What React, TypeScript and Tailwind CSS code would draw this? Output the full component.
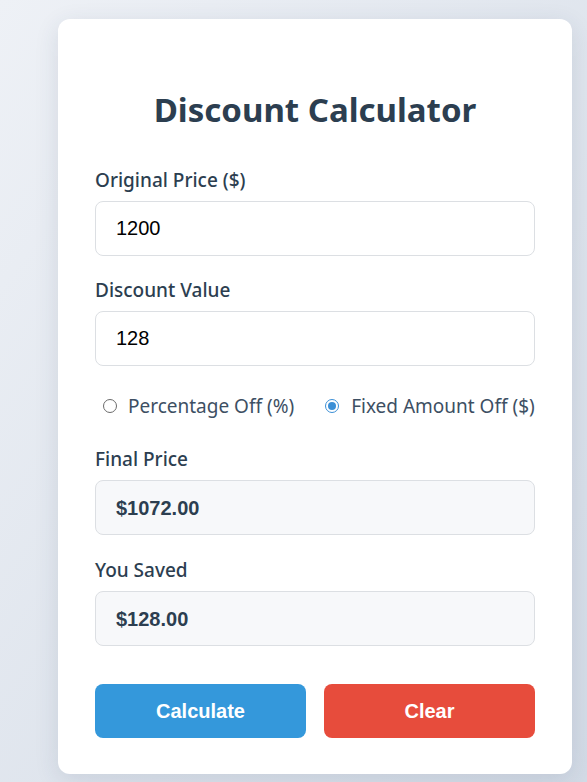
import React, { useState } from "react";

const labelCls =
  "block text-[19px] leading-[24px] font-medium text-[#2c3e50] mb-[9px] [font-family:'Noto_Sans',sans-serif]";
const inputCls =
  "w-full h-[55px] border border-[#dcdfe3] rounded-[8px] px-[20px] text-[20px] text-black bg-white outline-none [font-family:'Liberation_Sans',Arial,sans-serif]";
const outCls =
  "w-full h-[55px] border border-[#dcdfe3] rounded-[8px] px-[20px] text-[20px] font-bold text-[#2c3e50] bg-[#f7f8fa] flex items-center [font-family:'Liberation_Sans',Arial,sans-serif]";

export default function App() {
  const [price, setPrice] = useState("1200");
  const [disc, setDisc] = useState("128");
  const [mode, setMode] = useState<"pct" | "fixed">("fixed");
  return (
    <div className="min-h-[782px] w-full bg-gradient-to-br from-[#eef1f6] to-[#d3dbe6] pt-[19px] pl-[58px] pr-[15px] pb-[9px]">
      <div className="w-[514px] bg-white rounded-[12px] shadow-[0_6px_24px_rgba(40,60,90,0.12)] px-[37px] pt-[69px] pb-[36px]">
        <h1 className="text-center text-[33px] leading-[44px] font-bold text-[#2c3e50] mb-[36px] [font-family:'Noto_Sans',sans-serif]">
          Discount Calculator
        </h1>
        <label className={labelCls}>Original Price ($)</label>
        <input className={inputCls} value={price} onChange={(e) => setPrice(e.target.value)} />
        <label className={labelCls + " mt-[22px]"}>Discount Value</label>
        <input className={inputCls} value={disc} onChange={(e) => setDisc(e.target.value)} />
        <div className="flex items-center gap-[31px] mt-[28px] mb-[29px] pl-[8px] text-[19px] leading-[24px] text-[#3d4f63] whitespace-nowrap [font-family:'Noto_Sans',sans-serif]">
          <label className="flex items-center gap-[11px] shrink-0" onClick={() => setMode("pct")}>
            <span className="w-[14px] h-[14px] shrink-0 rounded-full border border-[#6b6b6b] bg-white flex items-center justify-center">
              {mode === "pct" && <span className="w-[8px] h-[8px] rounded-full bg-[#3498db]" />}
            </span>
            Percentage Off (%)
          </label>
          <label className="flex items-center gap-[12px] shrink-0" onClick={() => setMode("fixed")}>
            <span className={"w-[14px] h-[14px] shrink-0 rounded-full border flex items-center justify-center " + (mode === "fixed" ? "border-[#3b8fd6] bg-white" : "border-[#6b6b6b] bg-white")}>
              {mode === "fixed" && <span className="w-[8px] h-[8px] rounded-full bg-[#3b8fd6]" />}
            </span>
            Fixed Amount Off ($)
          </label>
        </div>
        <label className={labelCls}>Final Price</label>
        <div className={outCls}>$1072.00</div>
        <label className={labelCls + " mt-[23px]"}>You Saved</label>
        <div className={outCls}>$128.00</div>
        <div className="flex gap-[18px] mt-[38px]">
          <button className="flex-1 h-[54px] rounded-[8px] bg-[#3498db] text-white text-[20px] font-bold [font-family:'Liberation_Sans',Arial,sans-serif]">
            Calculate
          </button>
          <button className="flex-1 h-[54px] rounded-[8px] bg-[#e74c3c] text-white text-[20px] font-bold [font-family:'Liberation_Sans',Arial,sans-serif]">
            Clear
          </button>
        </div>
      </div>
    </div>
  );
}
